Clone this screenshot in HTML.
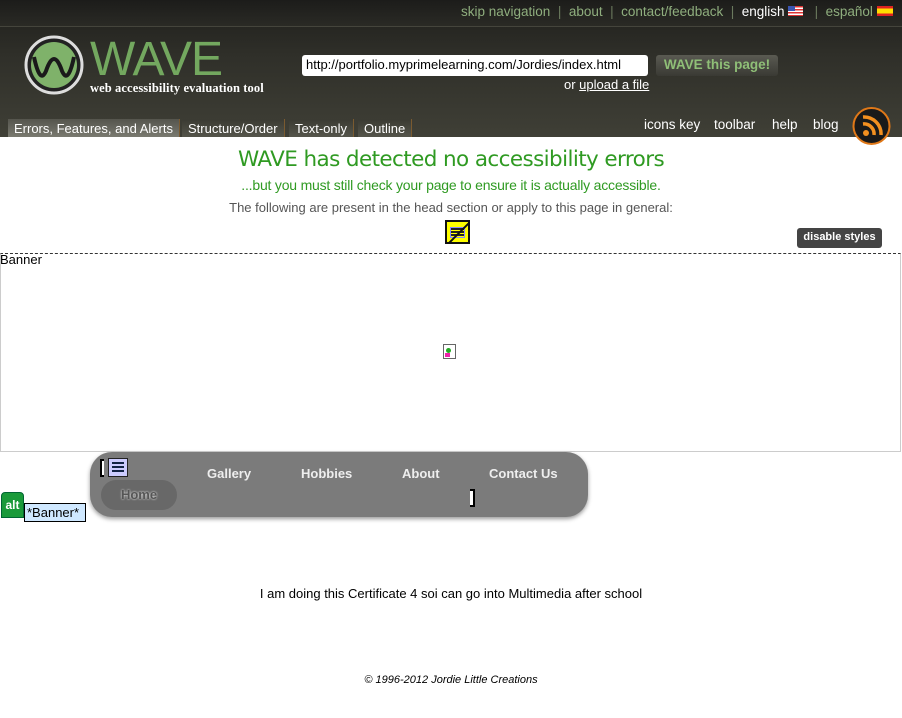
<!DOCTYPE html>
<html><head><style>
*{margin:0;padding:0;box-sizing:border-box}
body{width:902px;height:718px;background:#fff;font-family:"Liberation Sans",sans-serif;position:relative;overflow:hidden}
.hdr{position:absolute;left:0;top:0;width:902px;height:137px;background:linear-gradient(#1e1e1b,#2f2f29 40%,#3f3f36)}
.top{position:absolute;top:0;left:0;width:902px;height:27px;border-bottom:1px solid #45453c;background:linear-gradient(#1c1c1a,#2a2a25)}
.tl{position:absolute;top:4px;font-size:13.5px;color:#8fae7e;white-space:nowrap}
.sep{color:#6b7a5e}
.a{position:absolute;white-space:nowrap}
.tab{position:absolute;top:119px;height:18px;font-size:13px;color:#fff;padding:2px 6px 0;background:linear-gradient(#3a3a32,#55554b);border-right:1px solid #7a5a30}
.rl{position:absolute;top:117px;font-size:13.5px;color:#fff}
</style></head><body>
<div class="hdr"></div>
<div class="top"></div>
<div class="tl" style="left:461px">skip navigation <span class="sep">&nbsp;|&nbsp;</span> about <span class="sep">&nbsp;|&nbsp;</span> contact/feedback <span class="sep">&nbsp;|&nbsp;</span> <span style="color:#fff">english</span> <span style="display:inline-block;width:15px;height:10px;background:repeating-linear-gradient(#d33 0 1.5px,#fff 1.5px 3px);position:relative"><span style="position:absolute;left:0;top:0;width:7px;height:5px;background:#3a55b0"></span></span> <span class="sep">&nbsp;&nbsp;|&nbsp;</span> español <span style="display:inline-block;width:16px;height:10px;background:linear-gradient(#d22 0 25%,#fd0 25% 75%,#d22 75%)"></span></div>
<svg class="a" style="left:24px;top:35px" width="60" height="60" viewBox="0 0 60 60"><circle cx="30" cy="30" r="28" fill="#222" stroke="#ddd" stroke-width="3"/><circle cx="30" cy="30" r="23" fill="#7fb26a"/><path d="M10 22 Q16 50 22 36 Q30 12 38 36 Q44 50 50 22" fill="none" stroke="#1a1a1a" stroke-width="4"/></svg>
<div class="a" style="left:90px;top:36px;font-size:48px;color:#73a85f;letter-spacing:-1px;line-height:48px">WAVE</div>
<div class="a" style="left:90px;top:81px;font-size:12.5px;color:#fff;font-family:'Liberation Serif',serif;font-weight:bold;letter-spacing:0.1px">web accessibility evaluation tool</div>
<div class="a" style="left:302px;top:55px;width:346px;height:21px;background:#fff;border-radius:3px;font-size:13px;padding:2px 4px">http://portfolio.myprimelearning.com/Jordies/index.html</div>
<div class="a" style="left:656px;top:55px;width:122px;height:21px;background:linear-gradient(#5a5a52,#3a3a34);border-radius:3px;color:#8fbf77;font-size:13.5px;font-weight:bold;text-align:center;padding-top:2px">WAVE this page!</div>
<div class="a" style="left:564px;top:77px;font-size:13px;color:#fff">or <u>upload a file</u></div>
<div class="tab" style="left:8px;background:linear-gradient(#55554d,#7a7a70)">Errors, Features, and Alerts</div>
<div class="tab" style="left:182px">Structure/Order</div>
<div class="tab" style="left:289px">Text-only</div>
<div class="tab" style="left:358px">Outline</div>
<div class="rl" style="left:644px">icons key</div>
<div class="rl" style="left:714px">toolbar</div>
<div class="rl" style="left:772px">help</div>
<div class="rl" style="left:813px">blog</div>
<svg class="a" style="left:852px;top:107px" width="39" height="38" viewBox="0 0 39 38"><circle cx="19.5" cy="19" r="18" fill="#1a1a1a" stroke="#e07818" stroke-width="2"/><circle cx="14" cy="26" r="3" fill="#f39020"/><path d="M11 17a10 10 0 0 1 11 11M11 10a17 17 0 0 1 18 18" fill="none" stroke="#f39020" stroke-width="3.5"/></svg>
<div class="a" style="left:0;width:902px;top:147px;text-align:center;font-size:21.5px;color:#2f9a22;font-family:'DejaVu Sans',sans-serif;letter-spacing:-0.6px">WAVE has detected no accessibility errors</div>
<div class="a" style="left:0;width:902px;top:177px;text-align:center;font-size:14px;color:#2f9a22;letter-spacing:-0.2px">...but you must still check your page to ensure it is actually accessible.</div>
<div class="a" style="left:0;width:902px;top:200px;text-align:center;font-size:13px;color:#555">The following are present in the head section or apply to this page in general:</div>
<div class="a" style="left:445px;top:220px;width:25px;height:24px;background:#ff0;border:2px solid #111;overflow:hidden"><div style="position:absolute;left:3px;top:5px;width:15px;height:11px;border:1px solid #88f;background:repeating-linear-gradient(#222 0 2px,#ff0 2px 3px)"></div><div style="position:absolute;left:-4px;top:10px;width:32px;height:2px;background:#111;transform:rotate(-45deg)"></div></div>
<div class="a" style="left:797px;top:228px;width:85px;height:20px;background:#444;border-radius:3px;color:#fff;font-size:11px;font-weight:bold;text-align:center;padding-top:3px">disable styles</div>
<div class="a" style="left:0;top:253px;width:901px;height:199px;border:1px solid #ccc;border-top:1px dashed #333"></div>
<div class="a" style="left:0;top:252px;font-size:13px;color:#000">Banner</div>
<div class="a" style="left:443px;top:344px;width:13px;height:15px;border:1px solid #666;background:#fff"><div style="position:absolute;left:2px;top:3px;width:5px;height:5px;border-radius:50%;background:#2a2"></div><div style="position:absolute;left:1px;top:8px;width:5px;height:4px;background:#e2a"></div></div>
<div class="a" style="left:90px;top:452px;width:498px;height:65px;background:#7b7b7b;border-radius:22px;box-shadow:0 2px 4px #999"></div>
<div class="a" style="left:101px;top:480px;width:76px;height:30px;background:#686868;border-radius:15px;color:#555;font-size:13px;font-weight:bold;text-align:center;padding-top:7px;text-shadow:0 0 2px #fff">Home</div>
<div class="a" style="left:100px;top:459px;width:4px;height:18px;border:2px solid #000;border-right:none;background:#fff"></div>
<div class="a" style="left:108px;top:458px;width:20px;height:19px;background:#ccf;border:1px solid #222"><div style="margin:3px;height:11px;background:repeating-linear-gradient(#124 0 2px,#ccf 2px 4px)"></div></div>
<div class="a" style="left:207px;top:466px;font-size:13px;font-weight:bold;color:#eee">Gallery</div>
<div class="a" style="left:301px;top:466px;font-size:13px;font-weight:bold;color:#eee">Hobbies</div>
<div class="a" style="left:402px;top:466px;font-size:13px;font-weight:bold;color:#eee">About</div>
<div class="a" style="left:489px;top:466px;font-size:13px;font-weight:bold;color:#eee">Contact Us</div>
<div class="a" style="left:470px;top:489px;width:5px;height:18px;border:2px solid #000;border-left:none;background:#fff"></div>
<div class="a" style="left:1px;top:492px;width:23px;height:26px;background:#1a9a3a;border:1px solid #063;border-radius:4px 4px 0 0;color:#fff;font-size:12px;font-weight:bold;text-align:center;padding-top:5px">alt</div>
<div class="a" style="left:24px;top:503px;width:62px;height:19px;background:#cfe8ff;border:1px solid #000;font-size:13px;padding:1px 2px">*Banner*</div>
<div class="a" style="left:0;width:902px;top:586px;text-align:center;font-size:13px;color:#000">I am doing this Certificate 4 soi can go into Multimedia after school</div>
<div class="a" style="left:0;width:902px;top:674px;text-align:center;font-size:11px;font-style:italic;color:#000">© 1996-2012 Jordie Little Creations</div>
</body></html>
